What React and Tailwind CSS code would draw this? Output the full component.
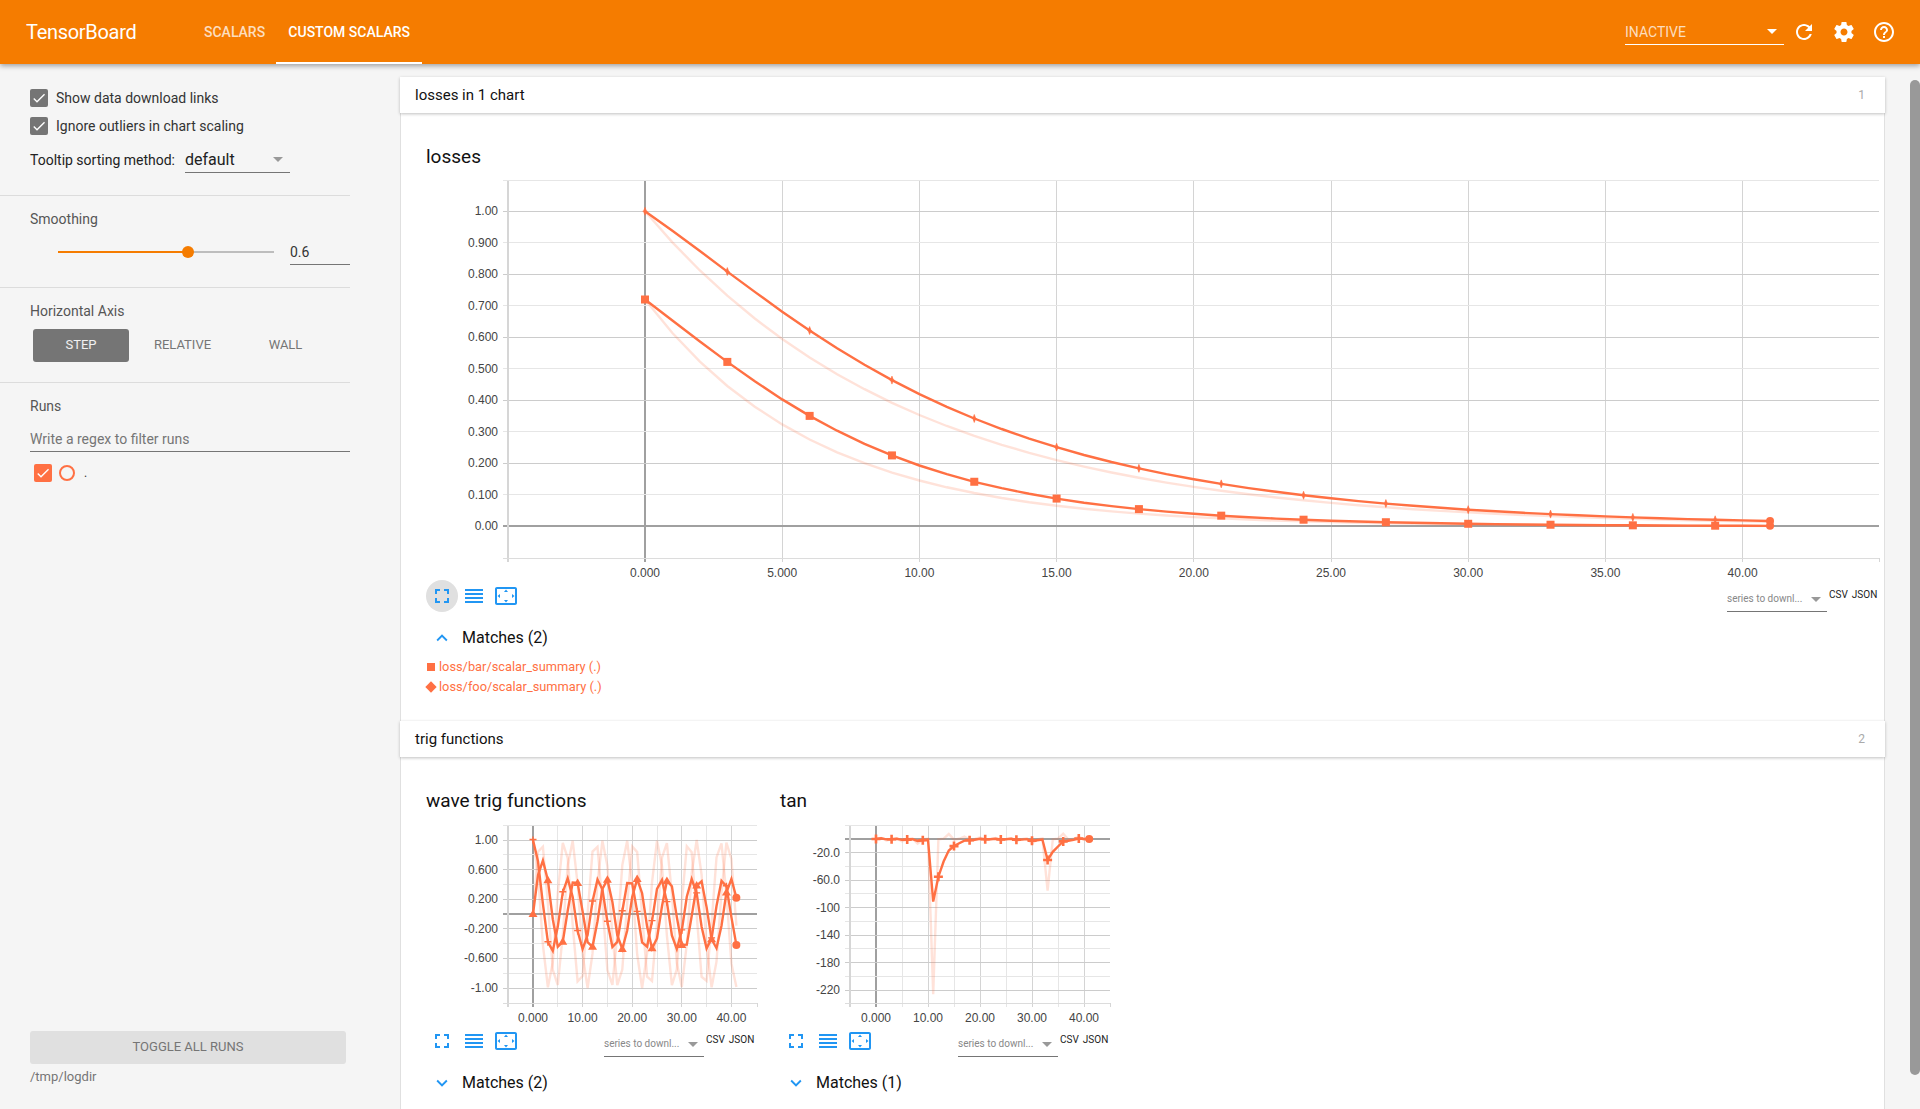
// TensorBoard custom scalars dashboard
import { useMemo } from 'react';

const P = {
  fullscreen: 'M7 14H5v5h5v-2H7v-3zm-2-4h2V7h3V5H5v5zm12 7h-3v2h5v-5h-2v3zM14 5v2h3v3h2V5h-5z',
  lines: 'M3 15h18v-2H3v2zm0 4h18v-2H3v2zm0-8h18V9H3v2zm0-6v2h18V5H3z',
  overscan: 'M12.01 5.5L10 8h4l-1.99-2.5zM18 10v4l2.5-1.99L18 10zM6 10l-2.5 2.01L6 14v-4zm8 6h-4l2.01 2.5L14 16zm7-13H3c-1.1 0-2 .9-2 2v14c0 1.1.9 2 2 2h18c1.1 0 2-.9 2-2V5c0-1.1-.9-2-2-2zm0 16.01H3V4.99h18v14.02z',
  refresh: 'M17.65 6.35C16.2 4.9 14.21 4 12 4c-4.42 0-7.99 3.58-7.99 8s3.57 8 7.99 8c3.73 0 6.84-2.55 7.73-6h-2.08c-.82 2.33-3.04 4-5.65 4-3.31 0-6-2.69-6-6s2.69-6 6-6c1.66 0 3.14.69 4.22 1.78L13 11h7V4l-2.35 2.35z',
  settings: 'M19.43 12.98c.04-.32.07-.64.07-.98s-.03-.66-.07-.98l2.11-1.65c.19-.15.24-.42.12-.64l-2-3.46c-.12-.22-.39-.3-.61-.22l-2.49 1c-.52-.4-1.08-.73-1.69-.98l-.38-2.65C14.46 2.18 14.25 2 14 2h-4c-.25 0-.46.18-.49.42l-.38 2.65c-.61.25-1.17.59-1.69.98l-2.49-1c-.23-.09-.49 0-.61.22l-2 3.46c-.13.22-.07.49.12.64l2.11 1.65c-.04.32-.07.65-.07.98s.03.66.07.98l-2.11 1.65c-.19.15-.24.42-.12.64l2 3.46c.12.22.39.3.61.22l2.49-1c.52.4 1.08.73 1.69.98l.38 2.65c.03.24.24.42.49.42h4c.25 0 .46-.18.49-.42l.38-2.65c.61-.25 1.17-.59 1.69-.98l2.49 1c.23.09.49 0 .61-.22l2-3.46c.12-.22.07-.49-.12-.64l-2.11-1.65zM12 15.5c-1.93 0-3.5-1.57-3.5-3.5s1.57-3.5 3.5-3.5 3.5 1.57 3.5 3.5-1.57 3.5-3.5 3.5z',
  help: 'M11 18h2v-2h-2v2zm1-16C6.48 2 2 6.48 2 12s4.48 10 10 10 10-4.48 10-10S17.52 2 12 2zm0 18c-4.41 0-8-3.59-8-8s3.59-8 8-8 8 3.59 8 8-3.59 8-8 8zm0-14c-2.21 0-4 1.79-4 4h2c0-1.1.9-2 2-2s2 .9 2 2c0 2-3 1.75-3 5h2c0-2.25 3-2.5 3-5 0-2.21-1.79-4-4-4z',
  check: 'M9 16.17L4.83 12l-1.42 1.41L9 19 21 7l-1.41-1.41z',
  up: 'M12 8l-6 6 1.41 1.41L12 10.83l4.59 4.58L18 14z',
  down: 'M16.59 8.59L12 13.17 7.41 8.59 6 10l6 6 6-6z',
};

function Icon({ d, className }) {
  return (
    <svg viewBox="0 0 24 24" className={className} fill="currentColor">
      <path d={d} />
    </svg>
  );
}

function Checkbox({ color = 'bg-[#757575]' }) {
  return (
    <span className={`w-[18px] h-[18px] rounded-[2px] flex items-center justify-center shrink-0 ${color}`}>
      <Icon d={P.check} className="w-4 h-4 text-white" />
    </span>
  );
}

function Arrow({ className }) {
  return <span className={`w-0 h-0 border-x-[5px] border-x-transparent border-t-[5px] ${className}`} />;
}

// TensorBoard's debiased exponential moving average
function smooth(values, w = 0.6) {
  let last = 0;
  return values.map((v, i) => {
    last = last * w + (1 - w) * v;
    return last / (1 - Math.pow(w, i + 1));
  });
}

const STEPS = Array.from({ length: 42 }, (_, i) => i);
const ORANGE = '#ff7043';

function Marker({ kind, x, y }) {
  if (kind === 'square') return <rect x={x - 4} y={y - 4} width="8" height="8" fill={ORANGE} />;
  if (kind === 'triangle') return <path d={`M${x} ${y - 4.5}L${x + 4.5} ${y + 3}L${x - 4.5} ${y + 3}Z`} fill={ORANGE} />;
  if (kind === 'thin') return <path d={`M${x} ${y - 4}L${x + 1.5} ${y}L${x} ${y + 4}L${x - 1.5} ${y}Z M${x - 2.5} ${y}H${x + 2.5}`} fill={ORANGE} stroke={ORANGE} strokeWidth="0.6" />;
  if (kind === 'star') return <path d={`M${x} ${y - 3.5}V${y + 3.5}M${x - 3.5} ${y - 0.5}H${x + 3.5}`} stroke={ORANGE} strokeWidth="1.4" />;
  if (kind === 'plus') return <path d={`M${x} ${y - 4.5}V${y + 4.5}M${x - 4.5} ${y}H${x + 4.5}`} stroke={ORANGE} strokeWidth="2.6" />;
  return null;
}

// width/height are the plot box; gutter is the room for the y labels on its left
function Chart({ width, height, sx, sy, xTicks, xGrid, yGrid, yTicks, yMajor, series, fmtX, fmtY, gutter }) {
  const lines = useMemo(() => series.map((s) => {
    const sm = smooth(s.raw);
    const pt = (vals) => vals.map((v, i) => `${sx(i).toFixed(1)},${sy(v).toFixed(1)}`).join(' ');
    return { ...s, sm, rawPts: pt(s.raw), smPts: pt(sm) };
  }), [series]);

  return (
    <svg width={width + gutter + 6} height={height + 24} viewBox={`${-gutter} 0 ${width + gutter + 6} ${height + 24}`} className="block">
      <g strokeWidth="1" shapeRendering="crispEdges">
        {xGrid.map((v) => (
          <line key={v} x1={sx(v)} x2={sx(v)} y1="0" y2={height + 4} stroke={v === 0 ? '#a0a0a0' : xTicks.includes(v) ? '#d4d4d4' : '#e6e6e6'} strokeWidth={v === 0 ? 2 : 1} />
        ))}
        {yGrid.map((v) => (
          <line key={v} x1="-5" x2={width} y1={sy(v)} y2={sy(v)} stroke={v === 0 ? '#a0a0a0' : yMajor.includes(v) ? '#cccccc' : '#e6e6e6'} strokeWidth={v === 0 ? 2 : 1} />
        ))}
        <line x1="0" x2="0" y1="0" y2={height + 4} stroke="#d6d6d6" strokeWidth="2" />
        <line x1={width} x2={width} y1={height} y2={height + 4} stroke="#d6d6d6" />
        <line x1="-5" x2={width} y1="0" y2="0" stroke="#e6e6e6" />
        <line x1="-5" x2={width} y1={height} y2={height} stroke="#dcdcdc" />
      </g>
      {lines.map((s) => (
        <polyline key={s.name + 'r'} points={s.rawPts} fill="none" stroke={ORANGE} strokeOpacity="0.2" strokeWidth="2.4" />
      ))}
      {lines.map((s) => (
        <g key={s.name}>
          <polyline points={s.smPts} fill="none" stroke={ORANGE} strokeWidth="2.4" />
          {s.sm.map((v, i) => (i % 3 === 0 ? <Marker key={i} kind={s.marker} x={sx(i)} y={sy(v)} /> : null))}
          <circle cx={sx(41)} cy={sy(s.sm[41])} r="4" fill={ORANGE} />
        </g>
      ))}
      <g fontSize="12" fill="#444" fontFamily="'Liberation Sans', sans-serif">
        {yTicks.map((v) => (
          <text key={v} x="-10" y={sy(v) + 4} textAnchor="end">{fmtY(v)}</text>
        ))}
        {xTicks.map((v) => (
          <text key={v} x={sx(v)} y={height + 19} textAnchor="middle">{fmtX(v)}</text>
        ))}
      </g>
    </svg>
  );
}

function ChartTools({ active }) {
  return (
    <div className="flex items-center">
      <span className={`w-8 h-8 rounded-full flex items-center justify-center text-[#2196f3] ${active ? 'bg-[#e0e0e0]' : ''}`}>
        <Icon d={P.fullscreen} className="w-6 h-6" />
      </span>
      <Icon d={P.lines} className="w-6 h-6 mx-1 text-[#2196f3]" />
      <Icon d={P.overscan} className="w-6 h-6 ml-1 text-[#2196f3]" />
    </div>
  );
}

function Download() {
  return (
    <div className="flex items-start mt-[6px]">
      <div className="w-[100px] h-[26px] border-b border-[#757575] flex items-center justify-between pr-[6px] text-[10px] text-[#888]">
        <span>series to downl...</span>
        <Arrow className="border-t-[#999] mt-[2px]" />
      </div>
      <div className="ml-[2px] text-[10px] text-[#222] leading-none pt-[4px] w-[50px] flex gap-[4px] whitespace-nowrap">
        <span>CSV</span><span>JSON</span>
      </div>
    </div>
  );
}

function Matches({ label, open }) {
  return (
    <div className="flex items-center h-6 text-base text-[#111]">
      <span className="w-8 flex justify-center">
        <Icon d={open ? P.up : P.down} className="w-[22px] h-[22px] text-[#2196f3]" />
      </span>
      <span className="ml-1">{label}</span>
    </div>
  );
}

function GroupHeader({ title, n }) {
  return (
    <div className="h-[36px] bg-white shadow-[0_1px_3px_rgba(0,0,0,0.25)] flex items-center justify-between pl-[15px] pr-[20px] text-[15px] text-[#111] relative">
      <span>{title}</span>
      <span className="text-xs text-[#aaa]">{n}</span>
    </div>
  );
}

const foo = STEPS.map((i) => Math.exp(-0.104 * i));
const bar = STEPS.map((i) => 0.72 * Math.exp(-0.16 * i));
const sinV = STEPS.map((i) => Math.sin(i));
const cosV = STEPS.map((i) => Math.cos(i));
const tanV = STEPS.map((i) => Math.tan(i));

const range = (from, to, step) => {
  const out = [];
  for (let v = from; v <= to + 1e-6; v += step) out.push(Math.round(v * 100) / 100);
  return out;
};

const PILL = 'flex-1 h-[33px] flex items-center justify-center text-[13px]';

export default function App() {
  return (
    <div className="h-screen overflow-hidden flex flex-col bg-[#f5f5f5] relative font-['Roboto',sans-serif]">
      <header className="h-[64px] shrink-0 bg-[#f57c00] shadow-[0_2px_5px_rgba(0,0,0,0.35)] z-10 flex items-stretch text-white">
        <div className="w-[192px] pl-[26px] flex items-center text-xl tracking-[-0.3px]">TensorBoard</div>
        <nav className="flex text-sm font-medium">
          <div className="px-3 flex items-center text-white/75">SCALARS</div>
          <div className="w-[146px] ml-[-1px] pt-[2px] flex items-center justify-center border-b-2 border-white">CUSTOM SCALARS</div>
        </nav>
        <div className="ml-auto flex items-center">
          <div className="w-[159px] h-[24px] mt-[2px] border-b border-white flex items-center justify-between pr-[7px] pb-[2px] text-sm text-white/75">
            <span>INACTIVE</span>
            <Arrow className="border-t-white" />
          </div>
          <Icon d={P.refresh} className="w-6 h-6 ml-[8px]" />
          <Icon d={P.settings} className="w-6 h-6 ml-[16px]" />
          <Icon d={P.help} className="w-6 h-6 ml-[16px] mr-[24px]" />
        </div>
      </header>

      <div className="flex-1 flex min-h-0">
        <aside className="w-[400px] shrink-0 pr-[50px] flex flex-col text-sm">
          <section className="h-[132px] pl-[30px] pt-[25px] border-b border-[#dcdcdc]">
            <label className="flex items-center gap-2 h-[18px] text-[#333]"><Checkbox />Show data download links</label>
            <label className="flex items-center gap-2 h-[18px] mt-[10px] text-[#333]"><Checkbox />Ignore outliers in chart scaling</label>
            <div className="flex items-center mt-[12px] text-[#222]">
              <span className="w-[155px]">Tooltip sorting method:</span>
              <div className="w-[105px] h-[26px] border-b border-[#757575] flex items-center justify-between pr-[7px] text-base">
                <span>default</span>
                <Arrow className="border-t-[#999]" />
              </div>
            </div>
          </section>

          <section className="h-[92px] pl-[30px] pt-[13px] border-b border-[#dcdcdc]">
            <div className="text-[#555]">Smoothing</div>
            <div className="flex items-center mt-[10px]">
              <div className="w-[216px] ml-[28px] h-[2px] bg-[#bdbdbd] flex items-center">
                <div className="w-[130px] h-[2px] bg-[#f57c00]" />
                <div className="w-3 h-3 rounded-full bg-[#f57c00] -ml-[6px]" />
              </div>
              <div className="w-[60px] ml-[16px] h-[26px] border-b border-[#757575] text-[#333] flex items-center">0.6</div>
            </div>
          </section>

          <section className="h-[95px] pl-[30px] pt-[13px] border-b border-[#dcdcdc]">
            <div className="text-[#555]">Horizontal Axis</div>
            <div className="flex w-[306px] ml-[3px] mt-[8px]">
              <div className={`${PILL} max-w-[96px] rounded-[3px] bg-[#757575] text-white/90`}>STEP</div>
              <div className={`${PILL} text-[#757575] pl-[2px]`}>RELATIVE</div>
              <div className={`${PILL} text-[#757575] pr-[2px]`}>WALL</div>
            </div>
          </section>

          <section className="flex-1 flex flex-col pl-[30px] pt-[13px]">
            <div className="text-[#555]">Runs</div>
            <div className="h-[23px] mt-[13px] border-b border-[#757575] text-[#757575]">Write a regex to filter runs</div>
            <div className="flex items-center mt-[12px] ml-[4px]">
              <Checkbox color="bg-[#ff7043]" />
              <span className="w-[16px] h-[16px] ml-[7px] rounded-full border-2 border-[#ff7043]" />
              <span className="ml-[9px] text-xs text-[#333]">.</span>
            </div>
            <div className="mt-auto w-[316px] h-[33px] rounded-[3px] bg-[#e0e0e0] text-[#757575] text-[13px] flex items-center justify-center">TOGGLE ALL RUNS</div>
            <div className="h-[45px] pt-[5px] text-[13px] leading-[15px] text-[#757575]">/tmp/logdir</div>
          </section>
        </aside>

        <main className="w-[1485px] pt-[13px] min-h-0">
          <GroupHeader title="losses in 1 chart" n="1" />
          <div className="h-[608px] bg-white border-x border-[#e0e0e0] pt-[31px] pl-[25px]">
            <h3 className="text-[19px] leading-[26px] text-[#111]">losses</h3>
            <div className="mt-[10px] -ml-[18px]">
              <Chart
                width={1371}
                height={378}
                gutter={100}
                sx={(i) => 137 + i * 27.44}
                sy={(v) => 346.3 - v * 315}
                xTicks={range(0, 40, 5)}
                xGrid={range(0, 40, 5)}
                yGrid={range(0, 1, 0.1)}
                yMajor={range(0, 1, 0.2)}
                yTicks={range(0, 1, 0.1)}
                series={[{ name: 'foo', raw: foo, marker: 'thin' }, { name: 'bar', raw: bar, marker: 'square' }]}
                fmtX={(v) => (v === 0 ? '0.000' : v < 10 ? `${v}.000` : `${v}.00`)}
                fmtY={(v) => (v === 0 || v === 1 ? v.toFixed(2) : v.toFixed(3))}
              />
            </div>
            <div className="flex items-start justify-between pr-[5px] -mt-[2px]">
              <ChartTools active />
              <Download />
            </div>
            <div className="mt-[14px]"><Matches label="Matches (2)" open /></div>
            <ul className="mt-[7px] text-[12.8px] leading-[20px] text-[#ff7043]">
              <li className="flex items-center">
                <span className="w-2 h-2 bg-[#ff7043] mr-[4px] ml-[1px]" />loss/bar/scalar_summary (.)
              </li>
              <li className="flex items-center">
                <span className="w-2 h-2 bg-[#ff7043] rotate-45 mr-[4px] ml-[1px]" />loss/foo/scalar_summary (.)
              </li>
            </ul>
          </div>

          <GroupHeader title="trig functions" n="2" />
          <div className="bg-white border-x border-[#e0e0e0] pt-[31px] pl-[25px] flex gap-[24px] h-[400px]">
            <div className="w-[330px]">
              <h3 className="text-[19px] leading-[26px] text-[#111]">wave trig functions</h3>
              <div className="mt-[11px] -ml-[18px]">
                <Chart
                  width={249}
                  height={178}
                  gutter={100}
                  sx={(i) => 25 + i * 4.96}
                  sy={(v) => 89 - v * 74}
                  xTicks={range(0, 40, 10)}
                  xGrid={range(0, 40, 5)}
                  yGrid={range(-1, 1, 0.2)}
                  yMajor={[1, 0.6, 0.2, -0.2, -0.6, -1]}
                  yTicks={[1, 0.6, 0.2, -0.2, -0.6, -1]}
                  series={[{ name: 'cos', raw: cosV, marker: 'star' }, { name: 'sin', raw: sinV, marker: 'triangle' }]}
                  fmtX={(v) => (v === 0 ? '0.000' : `${v}.00`)}
                  fmtY={(v) => (Math.abs(v) === 1 ? v.toFixed(2) : v.toFixed(3))}
                />
              </div>
              <div className="flex items-start justify-between -mt-[2px]">
                <ChartTools />
                <Download />
              </div>
              <div className="mt-[14px]"><Matches label="Matches (2)" /></div>
            </div>
            <div className="w-[330px]">
              <h3 className="text-[19px] leading-[26px] text-[#111]">tan</h3>
              <div className="mt-[11px] -ml-[18px]">
                <Chart
                  width={260}
                  height={178}
                  gutter={88}
                  sx={(i) => 26 + i * 5.2}
                  sy={(v) => 14 - v * 0.6867}
                  xTicks={range(0, 40, 10)}
                  xGrid={range(0, 40, 5)}
                  yGrid={range(-240, 0, 20)}
                  yMajor={[-20, -60, -100, -140, -180, -220]}
                  yTicks={[-20, -60, -100, -140, -180, -220]}
                  series={[{ name: 'tan', raw: tanV, marker: 'plus' }]}
                  fmtX={(v) => (v === 0 ? '0.000' : `${v}.00`)}
                  fmtY={(v) => (v > -100 ? v.toFixed(1) : String(v))}
                />
              </div>
              <div className="flex items-start justify-between -mt-[2px]">
                <ChartTools />
                <Download />
              </div>
              <div className="mt-[14px]"><Matches label="Matches (1)" /></div>
            </div>
          </div>
        </main>
      </div>

      <div className="absolute right-0 top-[80px] w-[10px] h-[995px] rounded-t-[5px] rounded-b-[5px] bg-[#999]" />
    </div>
  );
}
